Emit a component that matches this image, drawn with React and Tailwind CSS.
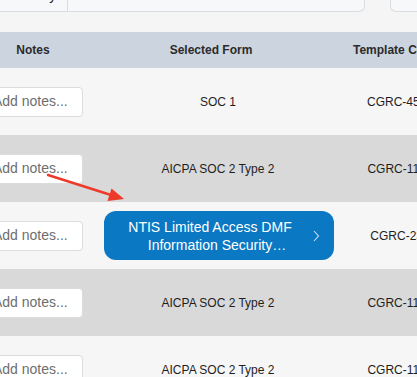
import React from "react";

const rows = [
  { form: "SOC 1", code: "CGRC-4521", bg: "bg-[#f6f6f6]" },
  { form: "AICPA SOC 2 Type 2", code: "CGRC-1102", bg: "bg-[#d9d9d9]" },
  { form: null, code: "CGRC-231", bg: "bg-[#f6f6f6]" },
  { form: "AICPA SOC 2 Type 2", code: "CGRC-1102", bg: "bg-[#d9d9d9]" },
  { form: "AICPA SOC 2 Type 2", code: "CGRC-1102", bg: "bg-[#f6f6f6]" },
];

function NotesInput() {
  return (
    <div className="w-[100px] h-[30px] shrink-0 bg-white border border-[#dcdcdc] rounded-[4px] flex items-center pl-[9px] text-[14px] text-[#6e6e6e] whitespace-nowrap overflow-hidden">
      Add notes...
    </div>
  );
}

function BlueButton() {
  return (
    <div className="ml-[2px] w-[230px] h-[49px] shrink-0 bg-[#0a78c3] rounded-[12px] flex items-center pl-[18px] pr-[14px]">
      <div className="flex-1 text-center text-white text-[14px] leading-[18px] pr-[14px]">
        <div>NTIS Limited Access DMF</div>
        <div className="pl-[14px]">Information Security…</div>
      </div>
      <svg width="8" height="12" viewBox="0 0 8 12" className="shrink-0">
        <path d="M2 1 L6.5 6 L2 11" fill="none" stroke="#cfe3f3" strokeWidth="1.1" />
      </svg>
    </div>
  );
}

export default function App() {
  return (
    <div
      className="relative w-[417px] h-[377px] overflow-hidden bg-[#f5f5f5]"
      style={{ fontFamily: '"Liberation Sans", Arial, sans-serif' }}
    >
      {/* top filter bar */}
      <div className="flex h-[12px] items-stretch">
        <div className="w-[68px] shrink-0 bg-[#f7f8fa] border-b border-r border-[#d9dce0] overflow-hidden">
          <div className="mt-[-13px] ml-[40px] text-[14px] leading-[16px] text-[#222]">By</div>
        </div>
        <div className="w-[297px] shrink-0 bg-[#f7f8fa] border-b border-r border-[#d9dce0] rounded-br-[6px]" />
        <div className="w-[25px] shrink-0" />
        <div className="w-[60px] shrink-0 bg-[#f7f8fa] border-b border-l border-[#d9dce0] rounded-bl-[6px]" />
      </div>

      <div className="mt-[20px] ml-[-50px] w-[560px]">
        {/* header */}
        <div className="flex h-[36px] items-center bg-[#cbd4df] text-[12px] font-bold text-[#2b2b2b]">
          <div className="w-[166px] shrink-0 text-center">Notes</div>
          <div className="w-[204px] shrink-0 text-center pr-[14px]">Selected Form</div>
          <div className="w-[190px] shrink-0 pl-[33px] whitespace-nowrap">Template Code</div>
        </div>
        {rows.map((r, i) => (
          <div key={i} className={`flex h-[67px] items-center ${r.bg} text-[12px] text-[#1e1e1e]`}>
            <div className="w-[166px] shrink-0 flex justify-center">
              <NotesInput />
            </div>
            <div className="w-[204px] shrink-0 flex justify-center whitespace-nowrap">
              {r.form ? r.form : <BlueButton />}
            </div>
            <div className="w-[160px] shrink-0 text-center whitespace-nowrap">{r.code}</div>
          </div>
        ))}
      </div>

      {/* red annotation arrow */}
      <svg className="absolute left-0 top-0 pointer-events-none" width="417" height="377">
        <line x1="48" y1="175" x2="111" y2="195" stroke="#ee3a2a" strokeWidth="2.5" strokeLinecap="round" />
        <polygon points="124,199 107.5,201 111.5,188.5" fill="#ee3a2a" />
      </svg>
    </div>
  );
}
